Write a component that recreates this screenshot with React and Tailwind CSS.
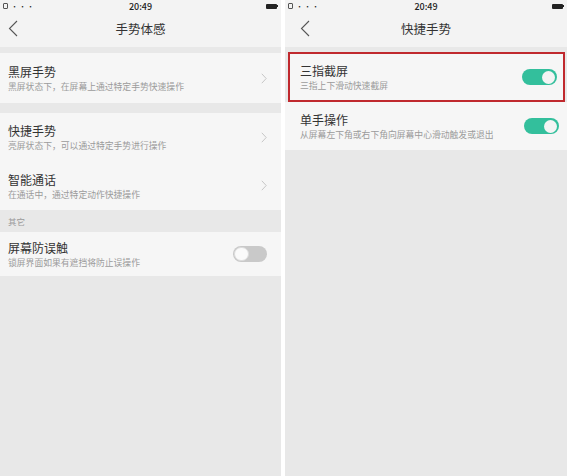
const font = { fontFamily: '"Noto Sans CJK SC", "Noto Sans", sans-serif' };

export default function App() {
  return (
    <div
      className="flex w-[567px] h-[476px] bg-white overflow-hidden"
      style={font}
    >
      <div className="w-[281px] h-full flex flex-col bg-[#e8e8e8]">
        <StatusBar />
        <Header title="手势体感" back="left-[8px]" />
        <div className="h-[6px]" />
        <LinkItem title="黑屏手势" sub="黑屏状态下，在屏幕上通过特定手势快速操作" h="h-[50px]" />
        <div className="h-[10px]" />
        <LinkItem title="快捷手势" sub="亮屏状态下，可以通过特定手势进行操作" h="h-[48px]" />
        <LinkItem title="智能通话" sub="在通话中，通过特定动作快捷操作" h="h-[49px]" />
        <div className="h-[22px] px-[8px] flex items-center text-[8.5px] text-[#9a9a9a]">
          其它
        </div>
        <div className="h-[44px] bg-[#f6f6f6] flex items-center pl-[8px] pr-[14px]">
          <Texts title="屏幕防误触" sub="锁屏界面如果有遮挡将防止误操作" />
          <Toggle on={false} />
        </div>
      </div>

      <div className="w-[4px] h-full bg-white" />

      <div className="flex-1 h-full flex flex-col bg-[#e8e8e8]">
        <StatusBar />
        <Header title="快捷手势" back="left-[15px]" />
        <div className="h-[5px]" />
        <div className="ml-[3px] mr-[2px] border-[2px] border-[#c0292e] h-[50px] bg-[#f6f6f6] flex items-center pl-[10px] pr-[6px]">
          <Texts title="三指截屏" sub="三指上下滑动快速截屏" />
          <Toggle on />
        </div>
        <div className="h-[48px] bg-[#f6f6f6] flex items-center pl-[15px] pr-[8px]">
          <Texts title="单手操作" sub="从屏幕左下角或右下角向屏幕中心滑动触发或退出" />
          <Toggle on />
        </div>
      </div>
    </div>
  );
}

function StatusBar() {
  return (
    <div className="h-[12px] bg-[#f3f3f3] flex items-center justify-between px-[3px] text-[#222]">
      <div className="flex items-center gap-[3px] w-[40px]">
        <div className="w-[5px] h-[6px] border border-[#555] rounded-[1px]" />
        <span className="text-[7px] leading-none tracking-[1px]">···</span>
      </div>
      <span className="text-[9px] leading-none font-medium">20:49</span>
      <div className="w-[40px] flex justify-end">
        <div className="flex items-center">
          <div className="w-[11px] h-[5px] bg-[#222] rounded-[1px]" />
          <div className="w-[1px] h-[2px] bg-[#222]" />
        </div>
      </div>
    </div>
  );
}

function Header({ title, back }) {
  return (
    <div className="h-[35px] bg-[#f3f3f3] relative flex items-center justify-center">
      <svg
        className={`absolute ${back} top-[8px]`}
        width="10"
        height="17"
        viewBox="0 0 10 17"
        fill="none"
      >
        <path d="M9 1 L1.5 8.5 L9 16" stroke="#555" strokeWidth="1.1" />
      </svg>
      <span className="text-[12.5px] text-[#333]">{title}</span>
    </div>
  );
}

function Texts({ title, sub }) {
  return (
    <div className="flex-1">
      <div className="text-[12px] leading-[17px] text-[#333]">{title}</div>
      <div className="text-[8.8px] leading-[13px] text-[#9b9b9b]">{sub}</div>
    </div>
  );
}

function LinkItem({ title, sub, h }) {
  return (
    <div className={`${h} bg-[#f6f6f6] flex items-center pl-[8px] pr-[14px]`}>
      <Texts title={title} sub={sub} />
      <svg width="6" height="11" viewBox="0 0 6 11" fill="none">
        <path d="M0.8 0.8 L5.2 5.5 L0.8 10.2" stroke="#c6c6c6" strokeWidth="1" />
      </svg>
    </div>
  );
}

function Toggle({ on }) {
  return on ? (
    <div className="w-[35px] h-[16px] rounded-full bg-[#33bf9c] flex items-center justify-end p-[2px]">
      <div className="w-[13px] h-[13px] rounded-full bg-[#f4f4f4]" />
    </div>
  ) : (
    <div className="w-[34px] h-[16px] rounded-full bg-[#c9c9c9] flex items-center justify-start p-[1px]">
      <div className="w-[15px] h-[14px] rounded-full bg-[#fafafa] border border-[#dcdcdc]" />
    </div>
  );
}
